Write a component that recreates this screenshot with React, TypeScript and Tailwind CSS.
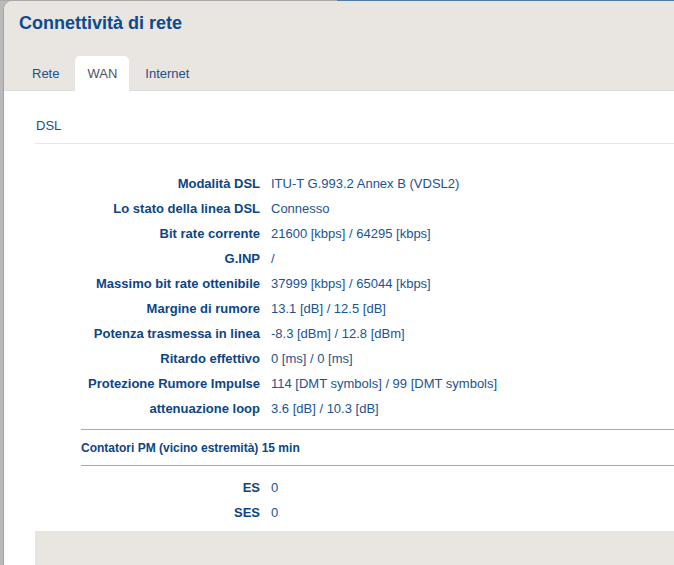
const rows: [string, string][] = [
  ['Modalità DSL', 'ITU-T G.993.2 Annex B (VDSL2)'],
  ['Lo stato della linea DSL', 'Connesso'],
  ['Bit rate corrente', '21600 [kbps] / 64295 [kbps]'],
  ['G.INP', '/'],
  ['Massimo bit rate ottenibile', '37999 [kbps] / 65044 [kbps]'],
  ['Margine di rumore', '13.1 [dB] / 12.5 [dB]'],
  ['Potenza trasmessa in linea', '-8.3 [dBm] / 12.8 [dBm]'],
  ['Ritardo effettivo', '0 [ms] / 0 [ms]'],
  ['Protezione Rumore Impulse', '114 [DMT symbols] / 99 [DMT symbols]'],
  ['attenuazione loop', '3.6 [dB] / 10.3 [dB]'],
];

const pmRows: [string, string][] = [
  ['ES', '0'],
  ['SES', '0'],
];

function InfoRow({ label, value }: { label: string; value: string }) {
  return (
    <div className="flex h-[25px] items-center">
      <div className="w-[225px] text-right font-bold text-[#0c4585]">{label}</div>
      <div className="pl-[11px] text-[#1b5391]">{value}</div>
    </div>
  );
}

export default function App() {
  return (
    <div
      className="relative h-[565px] w-[674px] overflow-hidden bg-[#b9b9b9] text-[13px]"
      style={{ fontFamily: '"Liberation Sans", Arial, sans-serif' }}
    >
      <div className="flex h-px">
        <div className="w-[337px] bg-[#a9a9a9]" />
        <div className="flex-1 bg-[#4d7ba3]" />
      </div>
      <div className="ml-[3px] w-[900px] overflow-hidden rounded-tl-[9px] border-l border-[#a4a4a4] bg-white">
        {/* header with title and tabs */}
        <div className="border-b border-[#dcdcdc] bg-[#e9e5e1]">
          <h1 className="px-[15px] pt-[11px] text-[18px] font-bold leading-[22px] text-[#0d4a8f]">
            Connettività di rete
          </h1>
          <div className="mt-[22px] flex pl-[13px]">
            <div className="flex h-[34px] items-center px-[15px] pt-px text-[#1f4f84]">Rete</div>
            <div className="-mb-px ml-px flex h-[35px] items-center rounded-t-[5px] bg-white px-[12px] pt-px text-[#4a5663]">
              WAN
            </div>
            <div className="flex h-[34px] items-center px-[16px] pt-px text-[#1f4f84]">Internet</div>
          </div>
        </div>

        <div className="pl-[31px]">
          <div className="flex h-[53px] items-end border-b border-[#e8e8e8] pb-[8px] pl-px text-[#1a4e8c]">
            DSL
          </div>

          <div className="pt-[27px]">
            {rows.map(([label, value]) => (
              <InfoRow key={label} label={label} value={value} />
            ))}
          </div>

          <div className="ml-[46px] mt-[8px] border-y border-[#aaaaaa]">
            <div className="flex h-[35px] items-center text-[12px] font-bold text-[#0c4585]">
              Contatori PM (vicino estremità) 15 min
            </div>
          </div>

          <div className="pt-[9px]">
            {pmRows.map(([label, value]) => (
              <InfoRow key={label} label={label} value={value} />
            ))}
          </div>

          <div className="mt-[6px] h-[60px] bg-[#e9e5e1]" />
        </div>
      </div>
    </div>
  );
}
